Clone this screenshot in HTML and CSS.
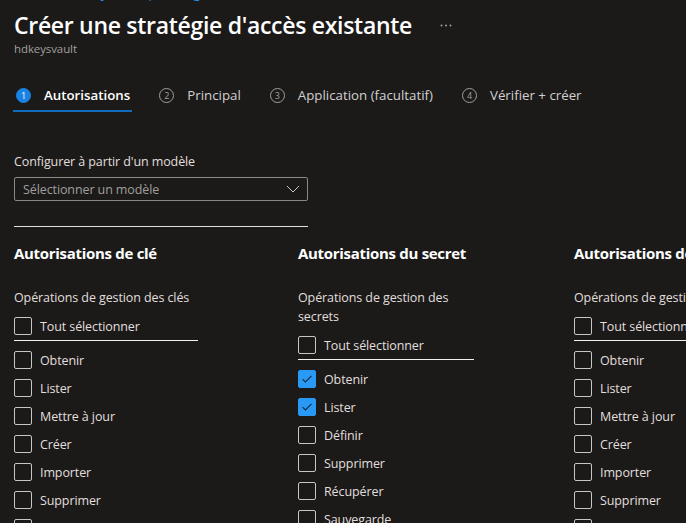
FILE: index.html
```html
<!DOCTYPE html>
<html lang="fr">
<head>
<meta charset="utf-8">
<title>Créer une stratégie d'accès existante</title>
<link rel="stylesheet" href="styles.css">
</head>
<body>
<div class="page">
  <div class="crumbs">Accueil &gt; hdkeysvault | Stratégies d'accès &gt;</div>
  <header class="head">
    <h1 class="title">Créer une stratégie d'accès existante</h1>
    <svg class="more" width="12" height="3" viewBox="0 0 12 3"><circle cx="1.5" cy="1.5" r="1" fill="#a19f9d"/><circle cx="6" cy="1.5" r="1" fill="#a19f9d"/><circle cx="10.5" cy="1.5" r="1" fill="#a19f9d"/></svg>
  </header>
  <div class="sub">hdkeysvault</div>

  <nav class="tabs">
    <div class="tab active"><span class="num">1</span><span class="tab-label">Autorisations</span></div>
    <div class="tab"><span class="num">2</span><span class="tab-label">Principal</span></div>
    <div class="tab"><span class="num">3</span><span class="tab-label">Application (facultatif)</span></div>
    <div class="tab"><span class="num">4</span><span class="tab-label">Vérifier + créer</span></div>
  </nav>

  <section class="template">
    <div class="field-label">Configurer à partir d'un modèle</div>
    <div class="select">
      <span class="placeholder">Sélectionner un modèle</span>
      <svg class="chevron" width="14" height="8" viewBox="0 0 14 8"><path d="M1 1 L7 7 L13 1" fill="none" stroke="#c8c6c4" stroke-width="1"/></svg>
    </div>
    <div class="rule"></div>
  </section>

  <div class="perms">
    <div class="col col-key">
      <h2 class="col-title">Autorisations de clé</h2>
      <div class="group-label">Opérations de gestion des clés</div>
      <div class="check all"><span class="box"></span><span>Tout sélectionner</span></div>
      <div class="list">
        <div class="check"><span class="box"></span><span>Obtenir</span></div>
        <div class="check"><span class="box"></span><span>Lister</span></div>
        <div class="check"><span class="box"></span><span>Mettre à jour</span></div>
        <div class="check"><span class="box"></span><span>Créer</span></div>
        <div class="check"><span class="box"></span><span>Importer</span></div>
        <div class="check"><span class="box"></span><span>Supprimer</span></div>
        <div class="check"><span class="box"></span><span>Récupérer</span></div>
      </div>
    </div>

    <div class="col col-secret">
      <h2 class="col-title">Autorisations du secret</h2>
      <div class="group-label">Opérations de gestion des<br>secrets</div>
      <div class="check all"><span class="box"></span><span>Tout sélectionner</span></div>
      <div class="list">
        <div class="check"><span class="box checked"><svg width="12" height="10" viewBox="0 0 12 10"><path d="M1.5 5.2 L4.4 8 L10.5 1.8" fill="none" stroke="#1b2a3a" stroke-width="1.1"/></svg></span><span>Obtenir</span></div>
        <div class="check"><span class="box checked"><svg width="12" height="10" viewBox="0 0 12 10"><path d="M1.5 5.2 L4.4 8 L10.5 1.8" fill="none" stroke="#1b2a3a" stroke-width="1.1"/></svg></span><span>Lister</span></div>
        <div class="check"><span class="box"></span><span>Définir</span></div>
        <div class="check"><span class="box"></span><span>Supprimer</span></div>
        <div class="check"><span class="box"></span><span>Récupérer</span></div>
        <div class="check"><span class="box"></span><span>Sauvegarde</span></div>
      </div>
    </div>

    <div class="col col-cert">
      <h2 class="col-title">Autorisations de certificat</h2>
      <div class="group-label">Opérations de gestion des certificats</div>
      <div class="check all"><span class="box"></span><span>Tout sélectionner</span></div>
      <div class="list">
        <div class="check"><span class="box"></span><span>Obtenir</span></div>
        <div class="check"><span class="box"></span><span>Lister</span></div>
        <div class="check"><span class="box"></span><span>Mettre à jour</span></div>
        <div class="check"><span class="box"></span><span>Créer</span></div>
        <div class="check"><span class="box"></span><span>Importer</span></div>
        <div class="check"><span class="box"></span><span>Supprimer</span></div>
        <div class="check"><span class="box"></span><span>Récupérer</span></div>
      </div>
    </div>
  </div>
</div>
</body>
</html>
```

FILE: styles.css
```css
html, body {
  margin: 0;
  padding: 0;
}
body {
  background: #1b1a19;
  color: #f3f2f1;
  font-family: "Open Sans", "Noto Sans", "Liberation Sans", sans-serif;
  width: 686px;
  height: 523px;
  overflow: hidden;
}
.page {
  padding: 0 14px;
}
.crumbs {
  height: 18px;
  margin-top: -16px;
  font-size: 13px;
  line-height: 18px;
  color: #2899f5;
  white-space: nowrap;
}
.head {
  display: flex;
  align-items: center;
  gap: 28px;
  margin-top: 7px;
}
.title {
  margin: 0;
  font-size: 23px;
  line-height: 32px;
  font-weight: 600;
  letter-spacing: -0.3px;
  color: #ffffff;
  white-space: nowrap;
}
.more {
  display: block;
}
.sub {
  font-size: 11.5px;
  line-height: 16px;
  letter-spacing: -0.1px;
  color: #a19f9d;
}
.tabs {
  display: flex;
  gap: 24px;
  margin-top: 22px;
  margin-left: -1px;
}
.tab {
  display: flex;
  align-items: center;
  gap: 13px;
  padding: 6px 2px 5px 3px;
  border-bottom: 2px solid transparent;
  font-size: 13.3px;
  line-height: 20px;
  color: #d2d0ce;
  white-space: nowrap;
}
.tab.active {
  border-bottom-color: #0f6cbd;
  color: #ffffff;
  font-weight: 600;
}
.num {
  box-sizing: border-box;
  width: 15px;
  height: 15px;
  border-radius: 50%;
  border: 1px solid #a19f9d;
  color: #a19f9d;
  font-size: 9px;
  line-height: 13px;
  font-weight: 400;
  text-align: center;
}
.tab.active .num {
  background: #1a82e2;
  border-color: #1a82e2;
  color: #ffffff;
}
.template {
  width: 294px;
  margin-top: 41px;
}
.field-label {
  font-size: 12.5px;
  line-height: 18px;
  letter-spacing: -0.1px;
  color: #e1dfdd;
}
.select {
  box-sizing: border-box;
  height: 24px;
  margin-top: 6px;
  border: 1px solid #8a8886;
  border-radius: 2px;
  display: flex;
  align-items: center;
  justify-content: space-between;
  padding: 0 7px 0 8px;
}
.placeholder {
  font-size: 12.5px;
  letter-spacing: -0.1px;
  color: #a19f9d;
}
.chevron {
  display: block;
}
.rule {
  height: 1px;
  margin-top: 25px;
  background: #e1dfdd;
}
.perms {
  display: flex;
  gap: 100px;
  margin-top: 15px;
}
.col {
  flex-shrink: 0;
  width: 184px;
}
.col-secret {
  width: 176px;
}
.col-title {
  margin: 0;
  font-size: 15px;
  line-height: 22px;
  font-weight: 700;
  letter-spacing: -0.3px;
  color: #ffffff;
  white-space: nowrap;
}
.group-label {
  margin-top: 24px;
  font-size: 12.5px;
  line-height: 19px;
  letter-spacing: -0.1px;
  color: #e1dfdd;
  white-space: nowrap;
}
.check {
  display: flex;
  align-items: center;
  gap: 8px;
  height: 28px;
  font-size: 12.5px;
  letter-spacing: -0.1px;
  color: #e1dfdd;
  white-space: nowrap;
}
.check.all {
  margin-top: 5px;
  border-bottom: 1px solid #f3f2f1;
}
.list {
  padding-top: 5px;
}
.box {
  box-sizing: border-box;
  flex-shrink: 0;
  width: 18px;
  height: 18px;
  border: 1px solid #c8c6c4;
  border-radius: 2px;
  display: flex;
  align-items: center;
  justify-content: center;
}
.box.checked {
  background: #2899f5;
  border-color: #2899f5;
}
.box svg {
  display: block;
}
```
